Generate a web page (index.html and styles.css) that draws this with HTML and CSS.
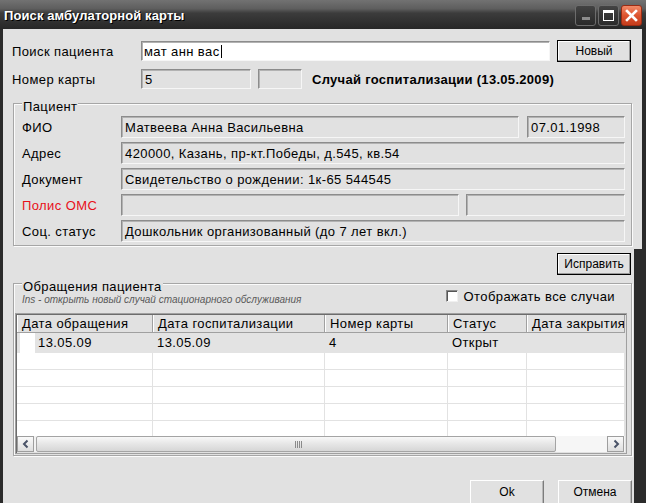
FILE: index.html
```html
<!DOCTYPE html>
<html lang="ru">
<head>
<meta charset="utf-8">
<title>Поиск амбулаторной карты</title>
<link rel="stylesheet" href="styles.css">
</head>
<body>
<div class="window">
  <div class="titlebar">
    <span class="title">Поиск амбулаторной карты</span>
    <div class="wbtns">
      <span class="wbtn min"><span class="min-bar"></span></span>
      <span class="wbtn max"><span class="max-box"></span></span>
      <span class="wbtn close"><svg width="13" height="13" viewBox="0 0 13 13"><path d="M2 2L11 11M11 2L2 11" stroke="#fff" stroke-width="2.6" stroke-linecap="square"/></svg></span>
    </div>
  </div>
  <div class="frame">
    <div class="row r1">
      <span class="lbl">Поиск пациента</span>
      <div class="input search">мат анн вас<span class="caret"></span></div>
      <span class="btn def">Новый</span>
    </div>
    <div class="row r2">
      <span class="lbl">Номер карты</span>
      <div class="field w110">5</div>
      <div class="field w44"></div>
      <span class="case">Случай госпитализации (13.05.2009)</span>
    </div>

    <fieldset class="group g1">
      <legend>Пациент</legend>
      <div class="prow"><span class="plbl">ФИО</span><div class="field fio">Матвеева Анна Васильевна</div><div class="field dob">07.01.1998</div></div>
      <div class="prow"><span class="plbl">Адрес</span><div class="field full">420000, Казань, пр-кт.Победы, д.545, кв.54</div></div>
      <div class="prow"><span class="plbl">Документ</span><div class="field full">Свидетельство о рождении: 1к-65 544545</div></div>
      <div class="prow"><span class="plbl red">Полис ОМС</span><div class="field pol1"></div><div class="field pol2"></div></div>
      <div class="prow last"><span class="plbl">Соц. статус</span><div class="field full">Дошкольник организованный (до 7 лет вкл.)</div></div>
    </fieldset>

    <div class="fixrow"><span class="btn def">Исправить</span></div>

    <fieldset class="group g2">
      <legend>Обращения пациента</legend>
      <div class="hintrow">
        <span class="hint">Ins - открыть новый случай стационарного обслуживания</span>
        <label class="chk"><span class="box"></span>Отображать все случаи</label>
      </div>
      <div class="grid">
        <div class="ghead">
          <span class="hc">Дата обращения</span>
          <span class="hc">Дата госпитализации</span>
          <span class="hc">Номер карты</span>
          <span class="hc">Статус</span>
          <span class="hc">Дата закрытия</span>
        </div>
        <div class="gbody">
          <div class="gr sel">
            <span class="dc first"><span class="ind"></span>13.05.09</span>
            <span class="dc">13.05.09</span>
            <span class="dc">4</span>
            <span class="dc">Открыт</span>
            <span class="dc"></span>
          </div>
          <div class="gr"><span class="dc"></span><span class="dc"></span><span class="dc"></span><span class="dc"></span><span class="dc"></span></div>
          <div class="gr"><span class="dc"></span><span class="dc"></span><span class="dc"></span><span class="dc"></span><span class="dc"></span></div>
          <div class="gr"><span class="dc"></span><span class="dc"></span><span class="dc"></span><span class="dc"></span><span class="dc"></span></div>
          <div class="gr"><span class="dc"></span><span class="dc"></span><span class="dc"></span><span class="dc"></span><span class="dc"></span></div>
          <div class="gr"><span class="dc"></span><span class="dc"></span><span class="dc"></span><span class="dc"></span><span class="dc"></span></div>
        </div>
        <div class="hscroll">
          <span class="sbtn"><svg width="10" height="12" viewBox="0 0 10 12"><path d="M6.5 2.5L3 6L6.5 9.5" fill="none" stroke="#4a5368" stroke-width="2"/></svg></span>
          <span class="thumb"><span class="grip"><i></i><i></i><i></i><i></i></span></span>
          <span class="track"></span>
          <span class="sbtn"><svg width="10" height="12" viewBox="0 0 10 12"><path d="M3.5 2.5L7 6L3.5 9.5" fill="none" stroke="#4a5368" stroke-width="2"/></svg></span>
        </div>
      </div>
    </fieldset>

    <div class="bottom">
      <span class="btn2">Ok</span>
      <span class="btn2">Отмена</span>
    </div>
  </div>
  <div class="edge"></div>
</div>
</body>
</html>
```
FILE: styles.css
```css
* { box-sizing: border-box; }
html, body { margin: 0; padding: 0; }
body {
  width: 646px;
  height: 503px;
  overflow: hidden;
  background: #2b2b2b;
  font-family: "Liberation Sans", Arial, sans-serif;
  font-size: 13px;
  letter-spacing: 0.4px;
  color: #000;
}
.window { position: relative; display: flex; flex-direction: column; height: 503px; }

.titlebar {
  height: 29px;
  flex: none;
  display: flex;
  align-items: center;
  justify-content: space-between;
  padding: 0 4px 0 4px;
  background: linear-gradient(#727272 0, #5e5e5e 30%, #3c3c3c 45%, #272727 100%);
}
.title {
  color: #fff;
  font-weight: bold;
  font-size: 13px;
  letter-spacing: 0.1px;
  text-shadow: 1px 1px 0 #000;
  margin-top: 2px;
}
.wbtns { display: flex; gap: 2px; align-items: center; margin-top: 1px; }
.wbtn {
  width: 21px; height: 21px; border-radius: 3px;
  display: flex; align-items: center; justify-content: center;
}
.min, .max { background: linear-gradient(#434343, #2a2a2a); border: 1px solid #6c6c6c; }
.close { background: linear-gradient(#f38a68, #dd5530 50%, #c43c1c); border: 1px solid #9a2c14; }
.min-bar { width: 8px; height: 3px; background: #8c8c8c; margin-top: 7px; }
.max-box { width: 11px; height: 11px; border: 1px solid #fff; border-top-width: 3px; }

.frame {
  flex: 1;
  background: #e1e1e1;
  margin: 0 4px 0 3px;
  display: flex;
  flex-direction: column;
}
/* dark window edge overlapping the lower right of the dialog */
.edge {
  position: absolute;
  left: 634px;
  top: 249px;
  width: 12px;
  bottom: 0;
  background: #2b2b2b;
}

.row { display: flex; align-items: center; padding-left: 9px; }
.r1 { margin-top: 11px; height: 22px; gap: 7px; }
.r1 .lbl { margin-right: -7px; }
.r2 { margin-top: 7px; height: 20px; }
.lbl { width: 129px; flex: none; }

.input, .field {
  flex: none;
  display: flex;
  align-items: center;
  white-space: nowrap;
  overflow: hidden;
  border: 1px solid;
  border-color: #8c8c8c #f6f6f6 #f6f6f6 #8c8c8c;
  box-shadow: inset 1px 1px 0 #b2b2b2;
}
.input { background: #fff; }
.field { background: #e1e1e1; padding: 0 3px; }
.search { width: 409px; height: 20px; padding: 0 2px; }
.caret { width: 1px; height: 13px; background: #000; margin-left: 1px; }
.w110 { width: 110px; height: 20px; }
.w44 { width: 44px; height: 20px; margin-left: 7px; }
.case { font-weight: bold; margin-left: 10px; letter-spacing: 0.3px; }

.btn {
  display: flex; align-items: center; justify-content: center;
  width: 74px; height: 22px; flex: none;
  font-size: 12px; letter-spacing: 0;
  background: #e1e1e1;
  border: 1px solid #000;
  box-shadow: inset -1px -1px 0 #9a9a9a, inset 1px 1px 0 #fff;
}

.group {
  margin: 0 0 0 10px;
  width: 619px;
  border: 1px solid #a6a6a6;
  box-shadow: inset 1px 1px 0 #fbfbfb, 1px 1px 0 #fbfbfb;
  min-inline-size: 0;
}
.group legend {
  padding: 7px 1px 0 1px;
  line-height: 15px;
  background: #e1e1e1;
}
.g1 { margin-top: 3px; padding: 2px 6px 3px 8px; }
.prow { display: flex; height: 22px; margin-bottom: 4px; }
.prow.last { margin-bottom: 0; }
.plbl { width: 99px; flex: none; display: flex; align-items: center; }
.red { color: #e8101a; }
.fio { width: 398px; }
.dob { width: 98px; margin-left: 8px; }
.full { width: 504px; }
.pol1 { width: 338px; }
.pol2 { width: 159px; margin-left: 7px; }

.fixrow { display: flex; justify-content: flex-end; padding-right: 11px; margin-top: 7px; }

.g2 { margin-top: -3px; padding: 0 4px 1px 1px; }
.g2 legend { margin-left: 7px; }
.hintrow { display: flex; justify-content: space-between; height: 18px; margin-top: -6px; }
.hint {
  font-size: 10px; font-style: italic; color: #5a5a5a;
  line-height: 12px; margin-top: 6px; margin-left: 7px; letter-spacing: 0;
}
.chk { display: flex; align-items: center; gap: 6px; height: 14px; margin-top: 1px; margin-right: 12px; }
.box {
  width: 12px; height: 12px; background: #fff;
  border: 1px solid; border-color: #8a8a8a #f0f0f0 #f0f0f0 #8a8a8a;
  box-shadow: inset 1px 1px 0 #555;
}

.grid {
  margin-top: 7px;
  width: 612px;
  border: 1px solid #a0a0a0;
  padding: 1px;
  box-shadow: inset 1px 1px 0 #6c6c6c;
  background: #e1e1e1;
}
.ghead, .gr { display: grid; grid-template-columns: 136px 172px 123px 79px 98px; }
.ghead { height: 18px; border-bottom: 1px solid #a0a0a0; background: #e1e1e1; }
.hc {
  border-right: 1px solid #a0a0a0;
  box-shadow: inset 1px 0 0 #fff;
  padding-left: 5px;
  white-space: nowrap; overflow: hidden;
  line-height: 17px;
}
.gbody { height: 103px; overflow: hidden; background: #fff; }
.gr { height: 17px; }
.gr .dc { border-right: 1px solid #e2e2e2; border-bottom: 1px solid #e2e2e2; }
.gr.sel { height: 20px; background: #e3e3e3; }
.gr.sel .dc { border: 0; padding-left: 4px; line-height: 20px; white-space: nowrap; }
.gr.sel .dc.first { padding-left: 3px; display: flex; align-items: center; }
.ind { width: 15px; height: 20px; background: #fff; margin-right: 3px; }

.hscroll { display: flex; height: 16px; background: #f2f2f2; }
.sbtn {
  width: 17px; height: 16px; flex: none;
  display: flex; align-items: center; justify-content: center;
  background: linear-gradient(#fafafa, #dedede);
  border: 1px solid #9e9e9e;
}
.sbtn:last-child { margin-right: 1px; }
.thumb {
  width: 520px; margin-left: 2px; flex: none;
  background: linear-gradient(#f8f8f8, #e6e6e6 50%, #d6d6d6);
  border: 1px solid #a4a4a4;
  border-radius: 2px;
  display: flex; justify-content: center; align-items: center;
}
.grip { display: flex; gap: 1px; margin-left: 4px; }
.grip i { display: block; width: 1px; height: 7px; background: #8a8a8a; }
.track { flex: 1; background: #f6f6f6; }

.bottom { display: flex; justify-content: flex-end; gap: 14px; padding-right: 10px; margin-top: 24px; }
.btn2 {
  width: 74px; height: 26px;
  display: flex; align-items: center; justify-content: center;
  font-size: 12px; letter-spacing: 0;
  background: #e1e1e1;
  border: 1px solid; border-color: #fff #7c7c7c #7c7c7c #fff;
  box-shadow: inset -1px -1px 0 #b8b8b8;
  padding-bottom: 2px;
}
```
